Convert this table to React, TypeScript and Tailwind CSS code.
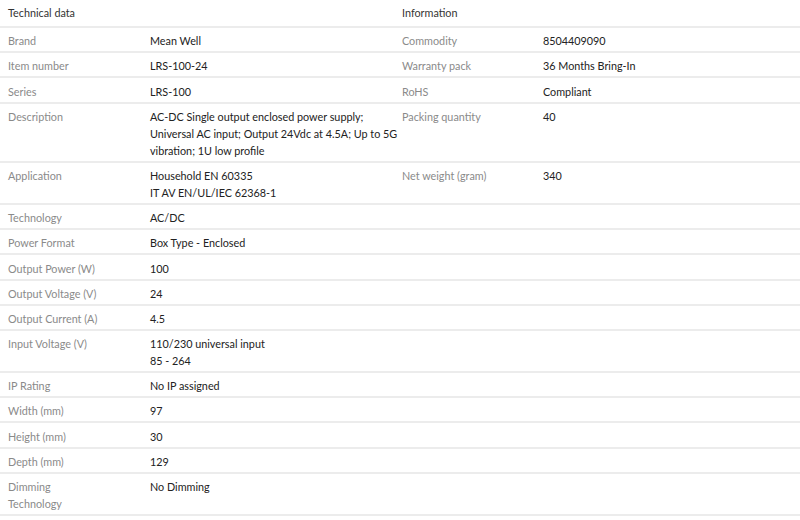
import React from 'react';

type Row = {
	label: string[];
	value: string[];
	label2?: string;
	value2?: string;
};

const rows: Row[] = [
	{ label: ['Brand'], value: ['Mean Well'], label2: 'Commodity', value2: '8504409090' },
	{ label: ['Item number'], value: ['LRS-100-24'], label2: 'Warranty pack', value2: '36 Months Bring-In' },
	{ label: ['Series'], value: ['LRS-100'], label2: 'RoHS', value2: 'Compliant' },
	{
		label: ['Description'],
		value: [
			'AC-DC Single output enclosed power supply;',
			'Universal AC input; Output 24Vdc at 4.5A; Up to 5G',
			'vibration; 1U low profile',
		],
		label2: 'Packing quantity',
		value2: '40',
	},
	{
		label: ['Application'],
		value: ['Household EN 60335', 'IT AV EN/UL/IEC 62368-1'],
		label2: 'Net weight (gram)',
		value2: '340',
	},
	{ label: ['Technology'], value: ['AC/DC'] },
	{ label: ['Power Format'], value: ['Box Type - Enclosed'] },
	{ label: ['Output Power (W)'], value: ['100'] },
	{ label: ['Output Voltage (V)'], value: ['24'] },
	{ label: ['Output Current (A)'], value: ['4.5'] },
	{ label: ['Input Voltage (V)'], value: ['110/230 universal input', '85 - 264'] },
	{ label: ['IP Rating'], value: ['No IP assigned'] },
	{ label: ['Width (mm)'], value: ['97'] },
	{ label: ['Height (mm)'], value: ['30'] },
	{ label: ['Depth (mm)'], value: ['129'] },
	{ label: ['Dimming', 'Technology'], value: ['No Dimming'] },
];

export default function App() {
	return (
		<div className="w-[800px] h-[520px] bg-white overflow-hidden font-['Lato',sans-serif] text-[10.8px] leading-[17px]">
			<table className="w-full border-collapse table-fixed">
				<colgroup>
					<col className="w-[142px]" />
					<col className="w-[252px]" />
					<col className="w-[141px]" />
					<col />
				</colgroup>
				<thead>
					<tr className="border-b-2 border-[#ececec] text-[#333]">
						<th className="text-left font-normal px-2 pt-[4px] pb-[5px]">Technical data</th>
						<th></th>
						<th className="text-left font-normal px-2 pt-[4px] pb-[5px]">Information</th>
						<th></th>
					</tr>
				</thead>
				<tbody>
					{rows.map((r) => (
						<tr key={r.label.join(' ')} className="border-b-2 border-[#ececec] align-top">
							<td className="px-2 pt-[4.2px] pb-[2px] text-[#8a8a8a]">
								{r.label.map((l) => (
									<div key={l}>{l}</div>
								))}
							</td>
							<td className="px-2 pt-[4.2px] pb-[2px] text-[#222]">
								{r.value.map((v) => (
									<div key={v} className="whitespace-nowrap">{v}</div>
								))}
							</td>
							<td className="px-2 pt-[4.2px] pb-[2px] text-[#8a8a8a]">{r.label2}</td>
							<td className="px-2 pt-[4.2px] pb-[2px] text-[#222]">{r.value2}</td>
						</tr>
					))}
				</tbody>
			</table>
		</div>
	);
}
